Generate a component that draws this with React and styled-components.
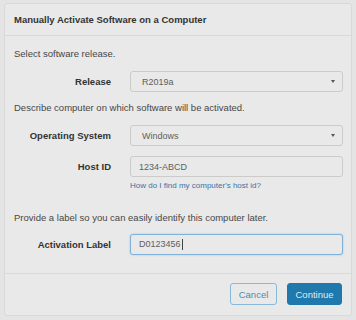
import React from 'react';
import styled, { createGlobalStyle } from 'styled-components';

const GlobalStyle = createGlobalStyle`
  html, body {
    margin: 0;
    padding: 0;
    background: #e4e4e4;
    font-family: "Liberation Sans", Arial, sans-serif;
  }
`;

const Page = styled.div`
  width: 356px;
  height: 320px;
  padding: 3px 4px 0 4px;
  box-sizing: border-box;
`;

const Card = styled.div`
  height: 313px;
  box-sizing: border-box;
  background: #e9e9e9;
  border: 1px solid #d9d9d9;
  border-radius: 3px;
  display: flex;
  flex-direction: column;
`;

const Header = styled.div`
  height: 31px;
  padding: 0 9px;
  display: flex;
  align-items: center;
  border-bottom: 1px solid #d9d9d9;
  font-size: 9.5px;
  font-weight: bold;
  color: #333;
`;

const Body = styled.div`
  flex: 1;
  padding: 9px 9px 0 9px;
  display: flex;
  flex-direction: column;
`;

const Note = styled.p`
  margin: 0;
  font-size: 9.5px;
  color: #474747;
  line-height: 15px;
  margin-top: ${({ top }) => top || 0}px;
`;

const Row = styled.div`
  display: grid;
  grid-template-columns: 97px 213px;
  column-gap: 19px;
  align-items: center;
  margin-top: ${({ top }) => top || 0}px;
`;

const Label = styled.label`
  text-align: right;
  font-size: 9.5px;
  font-weight: bold;
  color: #333;
`;

const Field = styled.div`
  height: 21px;
  box-sizing: border-box;
  border: 1px solid ${({ focus }) => (focus ? '#7fb2da' : '#cbcbcb')};
  box-shadow: ${({ focus }) => (focus ? '0 0 2px rgba(100,160,210,0.5)' : 'none')};
  border-radius: 3px;
  background: #e9e9e9;
  display: flex;
  align-items: center;
  justify-content: space-between;
  padding: 0 7px 0 ${({ select }) => (select ? 11 : 8)}px;
  font-size: 9px;
  color: #5e5e5e;
`;

const Caret = styled.span`
  width: 0;
  height: 0;
  border-left: 2px solid transparent;
  border-right: 2px solid transparent;
  border-top: 3px solid #555;
`;

const Cursor = styled.span`
  display: inline-block;
  width: 1px;
  height: 11px;
  background: #444;
  vertical-align: middle;
  margin-left: 1px;
`;

const HelpLink = styled.a`
  grid-column: 2;
  font-size: 8px;
  color: #3a72a6;
  text-decoration: none;
`;

const Footer = styled.div`
  height: 40px;
  border-top: 1px solid #d9d9d9;
  display: flex;
  justify-content: flex-end;
  align-items: center;
  gap: 10px;
  padding: 0 9px 1px 0;
`;

const Button = styled.button`
  height: 22px;
  box-sizing: border-box;
  border-radius: 3px;
  font-family: inherit;
  font-size: 9.5px;
  padding: 0;
  width: ${({ w }) => w}px;
  border: 1px solid ${({ primary }) => (primary ? '#1f78aa' : '#86b9da')};
  background: ${({ primary }) => (primary ? '#2079ac' : '#e9e9e9')};
  color: ${({ primary }) => (primary ? '#dfe9f0' : '#5288b3')};
`;

export default function App() {
  return (
    <>
      <GlobalStyle />
      <Page>
        <Card>
          <Header>Manually Activate Software on a Computer</Header>
          <Body>
            <Note top={1}>Select software release.</Note>
            <Row top={10}>
              <Label>Release</Label>
              <Field select>
                R2019a
                <Caret />
              </Field>
            </Row>
            <Note top={8}>Describe computer on which software will be activated.</Note>
            <Row top={10}>
              <Label>Operating System</Label>
              <Field select>
                Windows
                <Caret />
              </Field>
            </Row>
            <Row top={10}>
              <Label>Host ID</Label>
              <Field>1234-ABCD</Field>
            </Row>
            <Row top={4}>
              <HelpLink href="#">How do I find my computer's host id?</HelpLink>
            </Row>
            <Note top={20}>Provide a label so you can easily identify this computer later.</Note>
            <Row top={9}>
              <Label>Activation Label</Label>
              <Field focus>
                <span>
                  D0123456
                  <Cursor />
                </span>
              </Field>
            </Row>
          </Body>
          <Footer>
            <Button w={47}>Cancel</Button>
            <Button primary w={55}>Continue</Button>
          </Footer>
        </Card>
      </Page>
    </>
  );
}
